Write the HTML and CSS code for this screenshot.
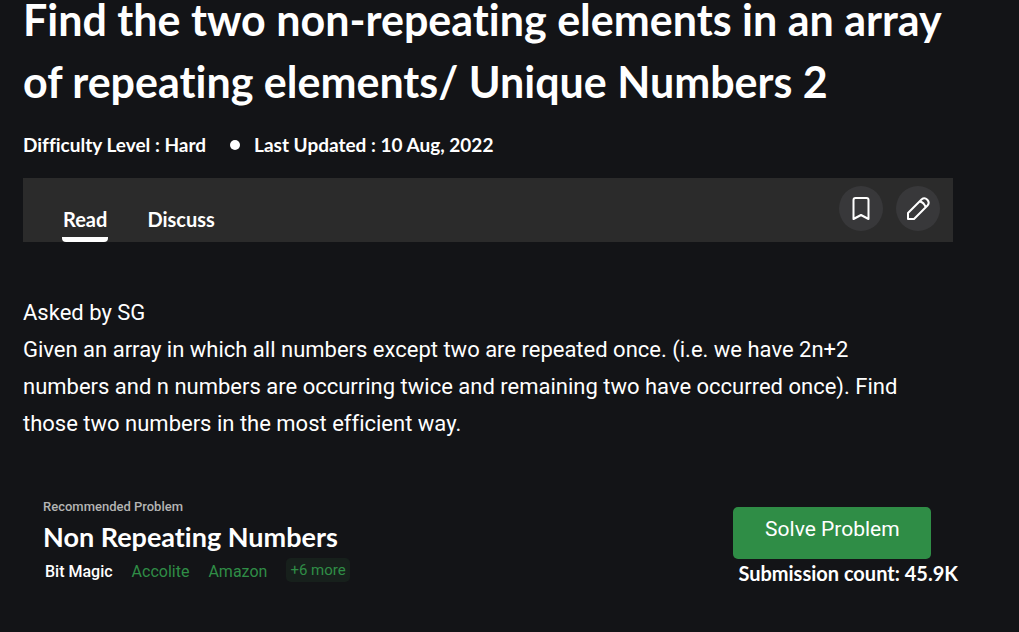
FILE: index.html
```html
<!DOCTYPE html>
<html lang="en">
<head>
<meta charset="utf-8">
<meta name="viewport" content="width=device-width, initial-scale=1">
<title>Find the two non-repeating elements in an array</title>
<link rel="stylesheet" href="styles.css">
</head>
<body>
<main class="article">
  <h1 class="title">Find the two non-repeating elements in an array of repeating elements/ Unique Numbers 2</h1>
  <ul class="meta">
    <li>Difficulty Level : Hard</li>
    <li class="meta-updated">Last Updated : 10 Aug, 2022</li>
  </ul>
  <div class="toolbar">
    <nav class="tabs">
      <a class="tab tab-active" href="#read">Read</a>
      <a class="tab" href="#discuss">Discuss</a>
    </nav>
    <div class="actions">
      <button class="round" type="button" aria-label="Bookmark">
        <svg width="18" height="26" viewBox="0 0 18 26" fill="none" stroke="#fff" stroke-width="2" stroke-linejoin="round"><path d="M1.500 23V4Q1.500 2 3.500 2H14.500Q16.500 2 16.500 4V23L9 19Z"/></svg>
      </button>
      <button class="round" type="button" aria-label="Edit">
        <svg width="24" height="24" viewBox="0 0 24 24" fill="none" stroke="#fff" stroke-width="2" stroke-linejoin="round"><path d="M2 22V16L15.500 2.500Q18.500 0 21.300 2.700Q24 5.500 21.500 8.500L8 22ZM14 4.500Q18 5.500 19.500 10"/></svg>
      </button>
    </div>
  </div>
  <p class="body">Asked by SG<br>Given an array in which all numbers except two are repeated once. (i.e. we have 2n+2 numbers and n numbers are occurring twice and remaining two have occurred once). Find those two numbers in the most efficient way.</p>
  <section class="recommended">
    <div class="problem">
      <p class="label">Recommended Problem</p>
      <h2 class="name">Non Repeating Numbers</h2>
      <div class="tags">
        <span class="topic">Bit Magic</span>
        <a class="tag" href="#accolite">Accolite</a>
        <a class="tag" href="#amazon">Amazon</a>
        <button class="more" type="button">+6 more</button>
      </div>
    </div>
    <div class="solve">
      <button class="solve-button" type="button">Solve Problem</button>
      <p class="count">Submission count: 45.9K</p>
    </div>
  </section>
</main>
</body>
</html>
```
FILE: styles.css
```css
* { box-sizing: border-box; }
body {
  margin: 0;
  background: #131417;
  color: #fff;
  font-family: Lato, sans-serif;
  font-variant-ligatures: no-common-ligatures;
}
h1, h2, p, ul { margin: 0; padding: 0; }
a { color: inherit; text-decoration: none; }
button { border: 0; padding: 0; font: inherit; color: inherit; cursor: pointer; }
svg { display: block; }
.article { padding: 0 61px 0 23px; }
.title {
  margin-top: -11px;
  font-size: 43px;
  line-height: 62px;
  font-weight: 700;
}
.meta {
  display: flex;
  gap: 24px;
  margin-top: 17px;
  list-style: none;
  font-size: 19px;
  line-height: 30px;
  font-weight: 700;
}
.meta-updated { display: flex; align-items: center; gap: 14px; }
.meta-updated::before {
  content: "";
  width: 10px;
  height: 10px;
  border-radius: 50%;
  background: #fff;
}
.toolbar {
  display: flex;
  justify-content: space-between;
  height: 64px;
  margin: 18px 5px 0 0;
  padding: 0 13px 0 39px;
  background: #2b2b2b;
}
.tabs { display: flex; align-items: flex-end; gap: 38px; }
.tab {
  padding: 0 1px 3px;
  border-bottom: 5px solid transparent;
  font-size: 20px;
  line-height: 30px;
  font-weight: 700;
}
.tab-active { border-color: #fff; border-radius: 0 0 4px 4px; }
.actions { display: flex; gap: 13px; padding-top: 8px; }
.round {
  display: grid;
  place-items: center;
  width: 44px;
  height: 45px;
  border-radius: 50%;
  background: #38383a;
}
.body {
  margin: 52px 24px 0 0;
  font-family: Roboto, sans-serif;
  font-size: 22px;
  line-height: 37px;
}
.recommended {
  display: flex;
  justify-content: space-between;
  margin-top: 55px;
  padding-left: 20px;
}
.label {
  color: #b4b4b4;
  font-family: Roboto, sans-serif;
  font-size: 13px;
  line-height: 20px;
  font-weight: 500;
}
.name { margin-top: 3px; font-size: 27px; line-height: 34px; font-weight: 700; }
.tags {
  display: flex;
  align-items: center;
  gap: 19px;
  margin-top: 4px;
  padding-left: 2px;
  font-family: Roboto, sans-serif;
  font-size: 16px;
  line-height: 28px;
  color: #2f8d46;
}
.topic { color: #fff; font-weight: 500; }
.more {
  align-self: flex-start;
  padding: 0 4px;
  border-radius: 5px;
  background: #17201c;
  font-size: 15px;
  line-height: 24px;
}
.solve { padding-top: 10px; }
.solve-button {
  display: block;
  width: 198px;
  height: 52px;
  padding-bottom: 8px;
  border-radius: 5px;
  background: #2f8d46;
  font-family: Roboto, sans-serif;
  font-size: 21px;
}
.count { padding-left: 5px; font-size: 20px; line-height: 28px; font-weight: 700; }
```
